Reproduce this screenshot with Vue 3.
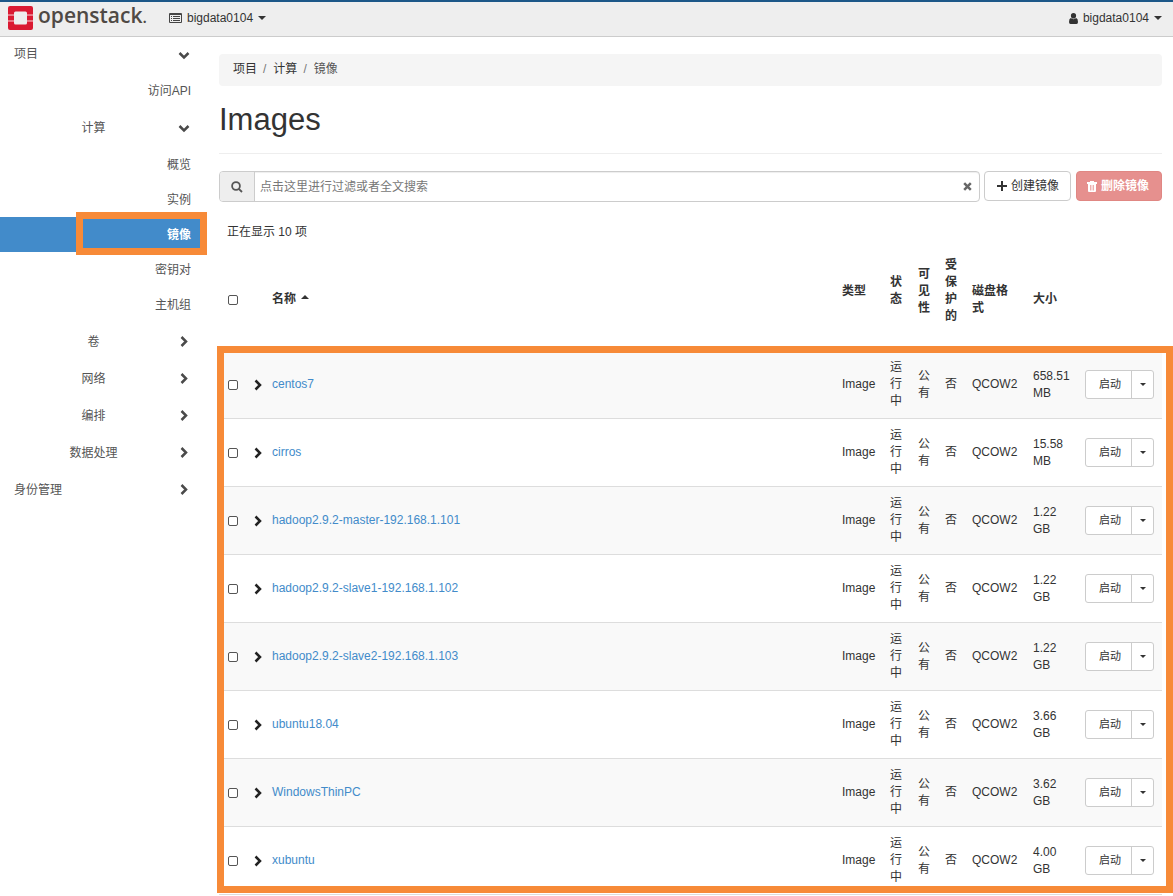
<script setup>
import { ref } from 'vue'

const computeItems = ['概览', '实例', '镜像', '密钥对', '主机组']
const active = ref('镜像')
const closedGroups = ['卷', '网络', '编排', '数据处理']

const images = [
  { name: 'centos7', size: '658.51 MB' },
  { name: 'cirros', size: '15.58 MB' },
  { name: 'hadoop2.9.2-master-192.168.1.101', size: '1.22 GB' },
  { name: 'hadoop2.9.2-slave1-192.168.1.102', size: '1.22 GB' },
  { name: 'hadoop2.9.2-slave2-192.168.1.103', size: '1.22 GB' },
  { name: 'ubuntu18.04', size: '3.66 GB' },
  { name: 'WindowsThinPC', size: '3.62 GB' },
  { name: 'xubuntu', size: '4.00 GB' },
]
</script>

<template>
  <div class="page">
    <header class="topbar">
      <a class="brand" href="#">
        <svg class="mark" viewBox="0 0 25 24" aria-hidden="true">
          <path fill="#da1a32" d="M2 0H23Q25 0 25 2V8H19V7Q19 5.500 17.500 5.500H7.500Q6 5.500 6 7V8H0V2Q0 0 2 0ZM0 16H6V17Q6 18.500 7.500 18.500H17.500Q19 18.500 19 17V16H25V22Q25 24 23 24H2Q0 24 0 22ZM0 9.500H6V14.500H0ZM19 9.500H25V14.500H19Z" />
          <path fill="#eb7080" d="M0 8H6V9.500H0ZM19 8H25V9.500H19ZM0 14.500H6V16H0ZM19 14.500H25V16H19Z" />
        </svg>
        <span class="wordmark">openstack<small>.</small></span>
      </a>
      <button class="menu" type="button">
        <svg class="list-icon" viewBox="0 0 13 11" aria-hidden="true">
          <path fill="#444" fill-rule="evenodd" d="M1 0H12Q13 0 13 1V9Q13 10 12 10H1Q0 10 0 9V1Q0 0 1 0ZM1 2V9H12V2ZM2 3H3V4H2ZM4 3H11V4H4ZM2 5H3V6H2ZM4 5H11V6H4ZM2 7H3V8H2ZM4 7H11V8H4Z" />
        </svg>
        <span>bigdata0104</span><i class="caret"></i>
      </button>
      <button class="menu user" type="button">
        <svg class="user-icon" viewBox="0 0 9 11" aria-hidden="true">
          <path fill="#333" d="M4.500 0A2.600 2.800 0 0 1 7.100 2.800A2.600 2.800 0 0 1 1.900 2.800A2.600 2.800 0 0 1 4.500 0ZM1.800 5Q4.500 7.300 7.200 5Q9 5.600 9 9Q9 11 7.500 11H1.500Q0 11 0 9Q0 5.600 1.800 5Z" />
        </svg>
        <span>bigdata0104</span><i class="caret"></i>
      </button>
    </header>

    <div class="body">
      <nav class="sidebar">
        <button class="head root first" type="button">
          <span>项目</span>
          <svg class="chev" viewBox="0 0 12 12" aria-hidden="true"><path d="M1.500 4L6 8.500L10.500 4" /></svg>
        </button>
        <a class="leaf api" href="#">访问API</a>
        <button class="head" type="button">
          <span>计算</span>
          <svg class="chev" viewBox="0 0 12 12" aria-hidden="true"><path d="M1.500 4L6 8.500L10.500 4" /></svg>
        </button>
        <div class="leaves">
          <a
            v-for="item in computeItems"
            :key="item"
            href="#"
            class="leaf"
            :class="{ active: item === active }"
            @click.prevent="active = item"
          >{{ item }}</a>
        </div>
        <button v-for="g in closedGroups" :key="g" class="head" type="button">
          <span>{{ g }}</span>
          <svg class="chev" viewBox="0 0 12 12" aria-hidden="true"><path d="M3.500 1L8 5.500L3.500 10" /></svg>
        </button>
        <button class="head root" type="button">
          <span>身份管理</span>
          <svg class="chev" viewBox="0 0 12 12" aria-hidden="true"><path d="M3.500 1L8 5.500L3.500 10" /></svg>
        </button>
      </nav>

      <main class="main">
        <ol class="crumbs">
          <li><a href="#">项目</a></li>
          <li><a href="#">计算</a></li>
          <li class="current">镜像</li>
        </ol>
        <h1>Images</h1>

        <div class="tools">
          <div class="search">
            <label class="addon" for="filter" aria-label="搜索">
              <svg viewBox="0 0 12 12" aria-hidden="true">
                <circle cx="5" cy="5" r="3.900" /><path d="M7.800 7.800L11 11" />
              </svg>
            </label>
            <input id="filter" type="text" placeholder="点击这里进行过滤或者全文搜索" />
            <button class="clear" type="button" aria-label="清除">
              <svg viewBox="0 0 9 9" aria-hidden="true"><path d="M1.200 1.200L7.800 7.800M7.800 1.200L1.200 7.800" /></svg>
            </button>
          </div>
          <div class="buttons">
            <button class="btn" type="button">
              <svg class="plus" viewBox="0 0 10 10" aria-hidden="true"><path fill="#333" d="M4 0H6V4H10V6H6V10H4V6H0V4H4Z" /></svg>
              创建镜像
            </button>
            <button class="btn danger" type="button" disabled>
              <svg class="trash" viewBox="0 0 10 11" aria-hidden="true">
                <path fill="#fff" fill-rule="evenodd" d="M3 0H7V1H10V3H0V1H3ZM1 3H9V10Q9 11 8 11H2Q1 11 1 10ZM3 4V9.500H3.700V4ZM4.700 4V9.500H5.300V4ZM6.300 4V9.500H7V4Z" />
              </svg>
              删除镜像
            </button>
          </div>
        </div>

        <p class="count">正在显示 10 项</p>

        <div class="table-wrap">
          <table>
            <colgroup>
              <col class="c-check" /><col class="c-more" /><col /><col class="c-type" />
              <col class="c-status" /><col class="c-narrow" /><col class="c-narrow" />
              <col class="c-format" /><col class="c-size" /><col class="c-action" />
            </colgroup>
            <thead>
              <tr>
                <th><input type="checkbox" aria-label="全选" /></th>
                <th></th>
                <th>名称<i class="sort"></i></th>
                <th class="sortable">类型</th>
                <th class="sortable">状态</th>
                <th class="sortable">可见性</th>
                <th class="sortable">受保护的</th>
                <th>磁盘格式</th>
                <th>大小</th>
                <th></th>
              </tr>
            </thead>
            <tbody>
              <tr v-for="img in images" :key="img.name">
                <td><input type="checkbox" :aria-label="img.name" /></td>
                <td>
                  <button class="expand" type="button" aria-label="展开">
                    <svg class="chev" viewBox="0 0 12 12" aria-hidden="true"><path d="M1.500 1.500L6 6L1.500 10.500" /></svg>
                  </button>
                </td>
                <td><a href="#">{{ img.name }}</a></td>
                <td>Image</td>
                <td>运行中</td>
                <td>公有</td>
                <td>否</td>
                <td>QCOW2</td>
                <td>{{ img.size }}</td>
                <td>
                  <div class="split">
                    <button class="launch" type="button">启动</button>
                    <button class="drop" type="button" aria-label="更多"><i class="caret"></i></button>
                  </div>
                </td>
              </tr>
            </tbody>
          </table>
          <div class="callout"></div>
        </div>
      </main>
    </div>
  </div>
</template>

<style>
body {
  margin: 0;
  background: #fff;
}
</style>

<style scoped>
.page,
.page *,
.page *::after {
  box-sizing: border-box;
}
.page {
  font-family: "Liberation Sans", "Noto Sans CJK SC", sans-serif;
  font-size: 12px;
  line-height: 17px;
  color: #333;
  overflow: hidden;
}
button,
input {
  font: inherit;
  color: inherit;
  margin: 0;
}
button {
  background: none;
  border: 0;
  padding: 0;
  cursor: pointer;
}
a {
  color: #428bca;
  text-decoration: none;
}

.topbar {
  display: flex;
  align-items: center;
  height: 37px;
  padding: 0 11px 2px 8px;
  background: #eee;
  border-top: 2px solid #1c5788;
  border-bottom: 1px solid #ccc;
}
.brand {
  display: flex;
  align-items: center;
  gap: 5px;
  width: 161px;
  color: #4f4944;
}
.mark {
  width: 25px;
  height: 24px;
}
.wordmark {
  padding-bottom: 4px;
  font-family: "Open Sans", sans-serif;
  font-weight: 600;
  font-size: 21px;
  line-height: 24px;
}
.wordmark small {
  font-size: 16px;
}
.menu {
  display: flex;
  align-items: center;
  gap: 5px;
}
.user {
  margin-left: auto;
}
.list-icon {
  width: 13px;
  height: 11px;
}
.user-icon {
  width: 9px;
  height: 11px;
}
.caret {
  width: 0;
  height: 0;
  border: 4px solid transparent;
  border-top-color: #333;
  border-bottom: 0;
}

.body {
  display: flex;
}
.sidebar {
  flex: 0 0 202px;
  display: flex;
  flex-direction: column;
}
.head {
  display: flex;
  align-items: center;
  height: 37px;
  padding: 0 12px 0 9px;
  color: #555;
}
.head span {
  flex: 1;
  padding-top: 2px;
  text-align: center;
}
.head.root {
  padding-left: 14px;
}
.head.root span {
  text-align: left;
}
.head.first {
  height: 35px;
}
.head.first span {
  padding-top: 0;
}
.chev {
  display: block;
  width: 12px;
  height: 12px;
  fill: none;
  stroke: #4a4a4a;
  stroke-width: 2.500;
}
.leaves {
  padding: 1px 0;
}
.leaf {
  display: block;
  position: relative;
  padding: 10px 11px 8px;
  color: #555;
  text-align: right;
}
.leaf.api {
  padding: 11px 11px 9px;
}
.leaf.active {
  background: #428bca;
  color: #fff;
  font-weight: bold;
}
.leaf.active::after {
  content: "";
  position: absolute;
  top: -5px;
  right: -5px;
  bottom: -3px;
  width: 131px;
  border: 7px solid #f78a38;
}

.main {
  flex: 1;
  min-width: 0;
  padding: 17px 11px 0 17px;
}
.crumbs {
  display: flex;
  margin: 0;
  padding: 7px 14px 8px;
  list-style: none;
  background: #f5f5f5;
  border-radius: 4px;
}
.crumbs a {
  color: #333;
}
.crumbs li + li::before {
  content: "/";
  padding: 0 7px 0 6px;
  color: #777;
}
.current {
  color: #555;
}
h1 {
  margin: 17px 0;
  padding-bottom: 17px;
  border-bottom: 1px solid #eee;
  font-size: 31px;
  font-weight: normal;
  line-height: 33px;
}
.tools {
  display: flex;
  gap: 4px;
  align-items: flex-start;
}
.buttons {
  display: flex;
  gap: 5px;
}
.search {
  flex: 1;
  display: flex;
  align-items: center;
  height: 31px;
  border: 1px solid #ccc;
  border-radius: 4px;
  box-shadow: inset 0 1px 1px #eee;
}
.addon {
  display: flex;
  align-items: center;
  justify-content: center;
  align-self: stretch;
  width: 35px;
  background: #eee;
  border-right: 1px solid #ccc;
  border-radius: 3px 0 0 3px;
}
.addon svg {
  width: 12px;
  height: 12px;
  fill: none;
  stroke: #555;
  stroke-width: 1.800;
}
.search input {
  flex: 1;
  min-width: 0;
  padding: 2px 5px 0;
  border: 0;
  outline: 0;
  background: none;
}
.search input::placeholder {
  color: #777;
  opacity: 1;
}
.clear {
  padding: 0 7px;
}
.clear svg {
  display: block;
  width: 9px;
  height: 9px;
  stroke: #666;
  stroke-width: 2.500;
}
.btn {
  display: flex;
  align-items: center;
  gap: 4px;
  height: 30px;
  padding: 0 11px 0 12px;
  background: #fff;
  border: 1px solid #ccc;
  border-radius: 4px;
}
.plus {
  width: 10px;
  height: 10px;
}
.trash {
  width: 10px;
  height: 11px;
}
.danger {
  padding: 0 12px 0 10px;
  background: #e6908e;
  border-color: #e08783;
  color: #fff;
  font-weight: bold;
}
.count {
  margin: 0;
  padding: 22px 8px 8px;
}

.table-wrap {
  position: relative;
}
table {
  width: 100%;
  table-layout: fixed;
  border-collapse: separate;
  border-spacing: 0;
}
.c-check { width: 27px; }
.c-more { width: 18px; }
.c-type { width: 48px; }
.c-status { width: 28px; }
.c-narrow { width: 27px; }
.c-format { width: 61px; }
.c-size { width: 52px; }
.c-action { width: 85px; }
th,
td {
  padding: 8px;
  text-align: left;
  vertical-align: middle;
}
th {
  padding-bottom: 9px;
}
td {
  border-bottom: 1px solid #ddd;
}
tbody tr:nth-child(odd) {
  background: #f9f9f9;
}
.sortable::after {
  content: "";
  display: block;
  height: 17px;
}
.sort {
  display: inline-block;
  margin-left: 5px;
  border: 4px solid transparent;
  border-bottom-color: #333;
  border-top: 0;
  vertical-align: 4px;
}
input[type="checkbox"] {
  display: block;
  appearance: none;
  width: 10px;
  height: 10px;
  margin-left: 1px;
  background: #fff;
  border: 1px solid #555;
  border-radius: 2px;
}
.expand {
  display: block;
}
.expand .chev {
  stroke: #222;
}
.split {
  display: flex;
  width: 69px;
  height: 29px;
  background: #fff;
  border: 1px solid #ccc;
  border-radius: 3px;
  font-size: 11px;
}
.launch {
  flex: 1;
  padding-left: 3px;
}
.drop {
  display: flex;
  align-items: center;
  justify-content: center;
  width: 22px;
  border-left: 1px solid #ccc;
}
.drop .caret {
  border-width: 3px;
  border-bottom-width: 0;
}
.callout {
  position: absolute;
  top: 97px;
  left: -2px;
  right: -11px;
  bottom: 2px;
  border: 7px solid #f78a38;
  pointer-events: none;
}
</style>
